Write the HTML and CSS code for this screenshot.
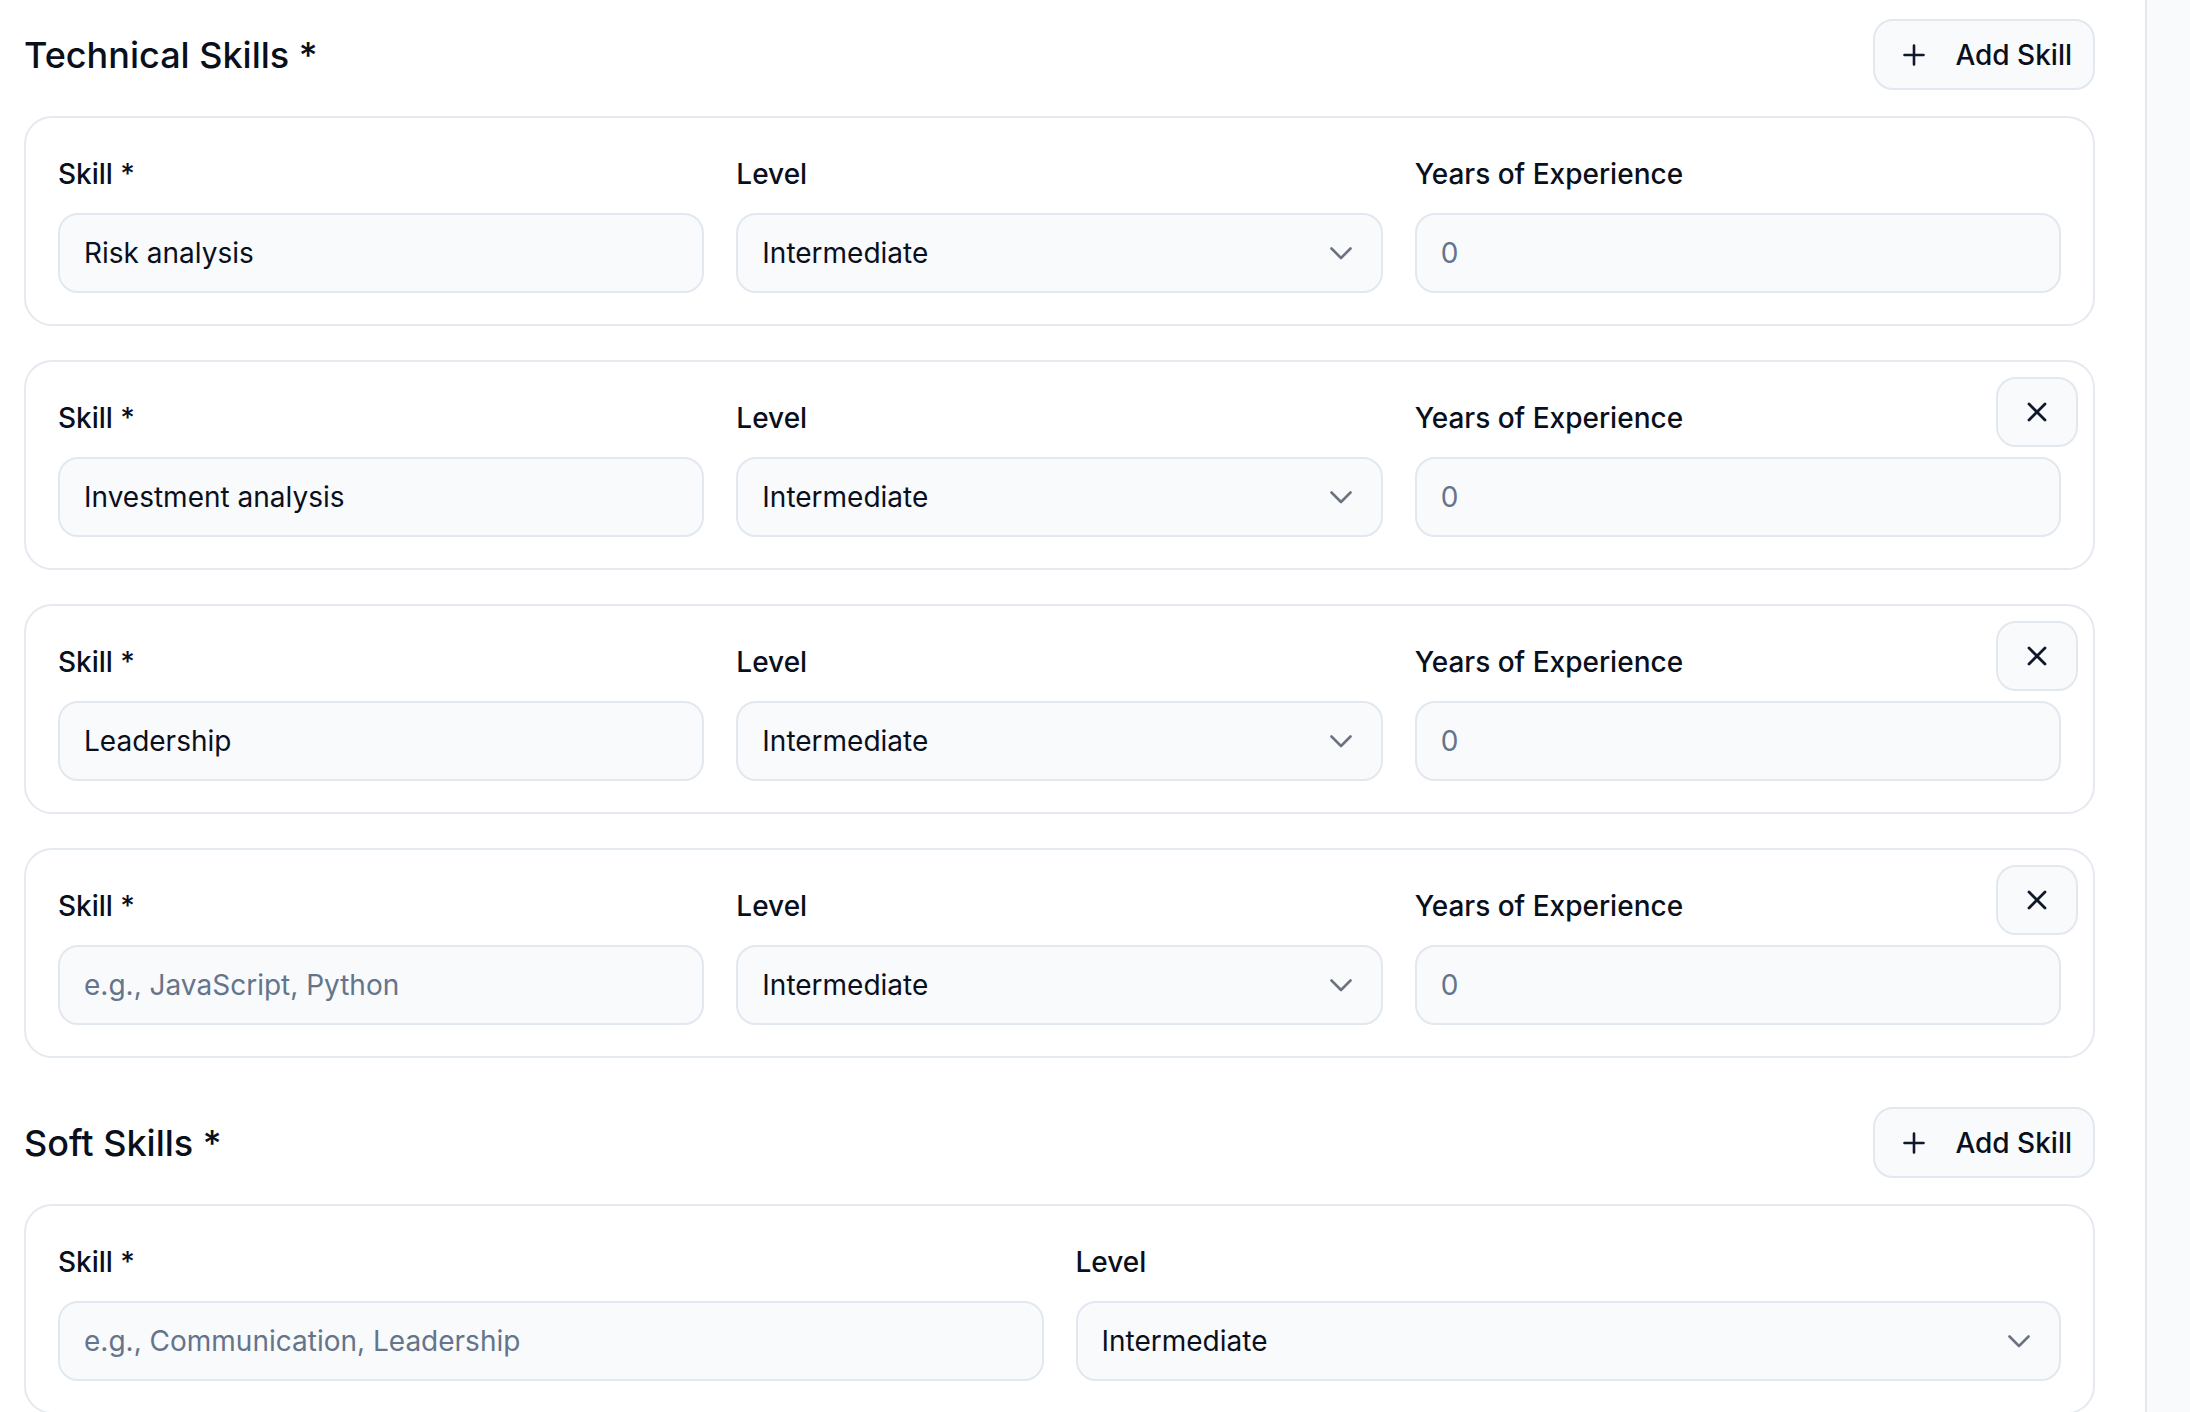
FILE: index.html
```html
<!DOCTYPE html>
<html lang="en">
<head>
<meta charset="utf-8">
<title>Skills</title>
<link rel="stylesheet" href="styles.css">
</head>
<body>
<div class="page">
  <main class="main">
    <section class="section">
      <div class="section-head">
        <h2 class="section-title">Technical Skills *</h2>
        <button class="add-btn" type="button">
          <svg class="plus" viewBox="0 0 22 22" width="22" height="22"><path d="M11 1.5v19M1.5 11h19" fill="none" stroke="#0f172a" stroke-width="2.6" stroke-linecap="round"/></svg>
          <span>Add Skill</span>
        </button>
      </div>
      <div class="cards">
        <div class="card">
          <div class="grid three">
            <div class="field-wrap"><label class="label">Skill *</label><input class="field" value="Risk analysis"></div>
            <div class="field-wrap"><label class="label">Level</label><div class="field select"><span>Intermediate</span><svg class="chev" viewBox="0 0 22 13" width="22" height="13"><path d="M1.5 1.5 11 11l9.5-9.5" fill="none" stroke="#6b7280" stroke-width="2.6" stroke-linecap="round" stroke-linejoin="round"/></svg></div></div>
            <div class="field-wrap"><label class="label">Years of Experience</label><input class="field muted" value="0"></div>
          </div>
        </div>
        <div class="card">
          <button class="remove-btn" type="button"><svg viewBox="0 0 20 20" width="20" height="20"><path d="M2 2l16 16M18 2 2 18" fill="none" stroke="#0f172a" stroke-width="2.8" stroke-linecap="round"/></svg></button>
          <div class="grid three">
            <div class="field-wrap"><label class="label">Skill *</label><input class="field" value="Investment analysis"></div>
            <div class="field-wrap"><label class="label">Level</label><div class="field select"><span>Intermediate</span><svg class="chev" viewBox="0 0 22 13" width="22" height="13"><path d="M1.5 1.5 11 11l9.5-9.5" fill="none" stroke="#6b7280" stroke-width="2.6" stroke-linecap="round" stroke-linejoin="round"/></svg></div></div>
            <div class="field-wrap"><label class="label">Years of Experience</label><input class="field muted" value="0"></div>
          </div>
        </div>
        <div class="card">
          <button class="remove-btn" type="button"><svg viewBox="0 0 20 20" width="20" height="20"><path d="M2 2l16 16M18 2 2 18" fill="none" stroke="#0f172a" stroke-width="2.8" stroke-linecap="round"/></svg></button>
          <div class="grid three">
            <div class="field-wrap"><label class="label">Skill *</label><input class="field" value="Leadership"></div>
            <div class="field-wrap"><label class="label">Level</label><div class="field select"><span>Intermediate</span><svg class="chev" viewBox="0 0 22 13" width="22" height="13"><path d="M1.5 1.5 11 11l9.5-9.5" fill="none" stroke="#6b7280" stroke-width="2.6" stroke-linecap="round" stroke-linejoin="round"/></svg></div></div>
            <div class="field-wrap"><label class="label">Years of Experience</label><input class="field muted" value="0"></div>
          </div>
        </div>
        <div class="card">
          <button class="remove-btn" type="button"><svg viewBox="0 0 20 20" width="20" height="20"><path d="M2 2l16 16M18 2 2 18" fill="none" stroke="#0f172a" stroke-width="2.8" stroke-linecap="round"/></svg></button>
          <div class="grid three">
            <div class="field-wrap"><label class="label">Skill *</label><input class="field" placeholder="e.g., JavaScript, Python"></div>
            <div class="field-wrap"><label class="label">Level</label><div class="field select"><span>Intermediate</span><svg class="chev" viewBox="0 0 22 13" width="22" height="13"><path d="M1.5 1.5 11 11l9.5-9.5" fill="none" stroke="#6b7280" stroke-width="2.6" stroke-linecap="round" stroke-linejoin="round"/></svg></div></div>
            <div class="field-wrap"><label class="label">Years of Experience</label><input class="field muted" value="0"></div>
          </div>
        </div>
      </div>
    </section>

    <section class="section soft">
      <div class="section-head">
        <h2 class="section-title">Soft Skills *</h2>
        <button class="add-btn" type="button">
          <svg class="plus" viewBox="0 0 22 22" width="22" height="22"><path d="M11 1.5v19M1.5 11h19" fill="none" stroke="#0f172a" stroke-width="2.6" stroke-linecap="round"/></svg>
          <span>Add Skill</span>
        </button>
      </div>
      <div class="cards">
        <div class="card">
          <div class="grid two">
            <div class="field-wrap"><label class="label">Skill *</label><input class="field" placeholder="e.g., Communication, Leadership"></div>
            <div class="field-wrap"><label class="label">Level</label><div class="field select"><span>Intermediate</span><svg class="chev" viewBox="0 0 22 13" width="22" height="13"><path d="M1.5 1.5 11 11l9.5-9.5" fill="none" stroke="#6b7280" stroke-width="2.6" stroke-linecap="round" stroke-linejoin="round"/></svg></div></div>
          </div>
        </div>
      </div>
    </section>
  </main>
  <aside class="side"></aside>
</div>
</body>
</html>
```

FILE: styles.css
```css
* { box-sizing: border-box; }
html, body { margin: 0; padding: 0; }
body {
  background: #ffffff;
  font-family: Inter, "Noto Sans", "Liberation Sans", sans-serif;
  color: #0f172a;
  overflow: hidden;
}
.page {
  display: flex;
  min-height: 1412px;
}
.main {
  flex: 1;
  padding: 19px 50px 0 24px;
}
.side {
  width: 45px;
  flex: none;
  background: #f8fafc;
  border-left: 2px solid #e2e8f0;
}
.section-head {
  display: flex;
  align-items: center;
  justify-content: space-between;
  height: 71px;
  margin-bottom: 26px;
}
.section-title {
  margin: 0;
  font-size: 36px;
  font-weight: 500;
  color: #0a0f1c;
}
.soft { margin-top: 49px; }
.add-btn {
  display: flex;
  align-items: center;
  gap: 30px;
  height: 71px;
  padding: 0 21px 0 28px;
  border: 2px solid #e2e8f0;
  border-radius: 20px;
  background: #f8fafc;
  font-family: inherit;
  font-size: 28px;
  font-weight: 500;
  color: #0a0f1c;
  white-space: nowrap;
}
.plus { flex: none; }
.cards {
  display: flex;
  flex-direction: column;
  gap: 34px;
}
.card {
  position: relative;
  border: 2px solid #e5e9f0;
  border-radius: 28px;
  padding: 36px 32px 31px 32px;
  background: #fff;
}
.grid {
  display: grid;
  gap: 32px;
}
.grid.three { grid-template-columns: repeat(3, 1fr); }
.grid.two { grid-template-columns: repeat(2, 1fr); }
.field-wrap {
  display: flex;
  flex-direction: column;
  min-width: 0;
}
.label {
  font-size: 28px;
  line-height: 40px;
  font-weight: 500;
  margin-bottom: 19px;
  color: #0a0f1c;
}
.field {
  height: 80px;
  width: 100%;
  border: 2px solid #e2e8f0;
  border-radius: 20px;
  background: #f8fafc;
  padding: 0 24px;
  font-family: inherit;
  font-size: 28px;
  color: #0a0f1c;
  outline: none;
}
.field::placeholder { color: #64748b; }
.field.muted { color: #64748b; }
.select {
  display: flex;
  align-items: center;
  justify-content: space-between;
  padding-right: 29px;
}
.chev { flex: none; }
.remove-btn {
  position: absolute;
  top: 15px;
  right: 15px;
  width: 82px;
  height: 70px;
  display: flex;
  align-items: center;
  justify-content: center;
  border: 2px solid #e2e8f0;
  border-radius: 20px;
  background: #f8fafc;
  padding: 0;
}
```
